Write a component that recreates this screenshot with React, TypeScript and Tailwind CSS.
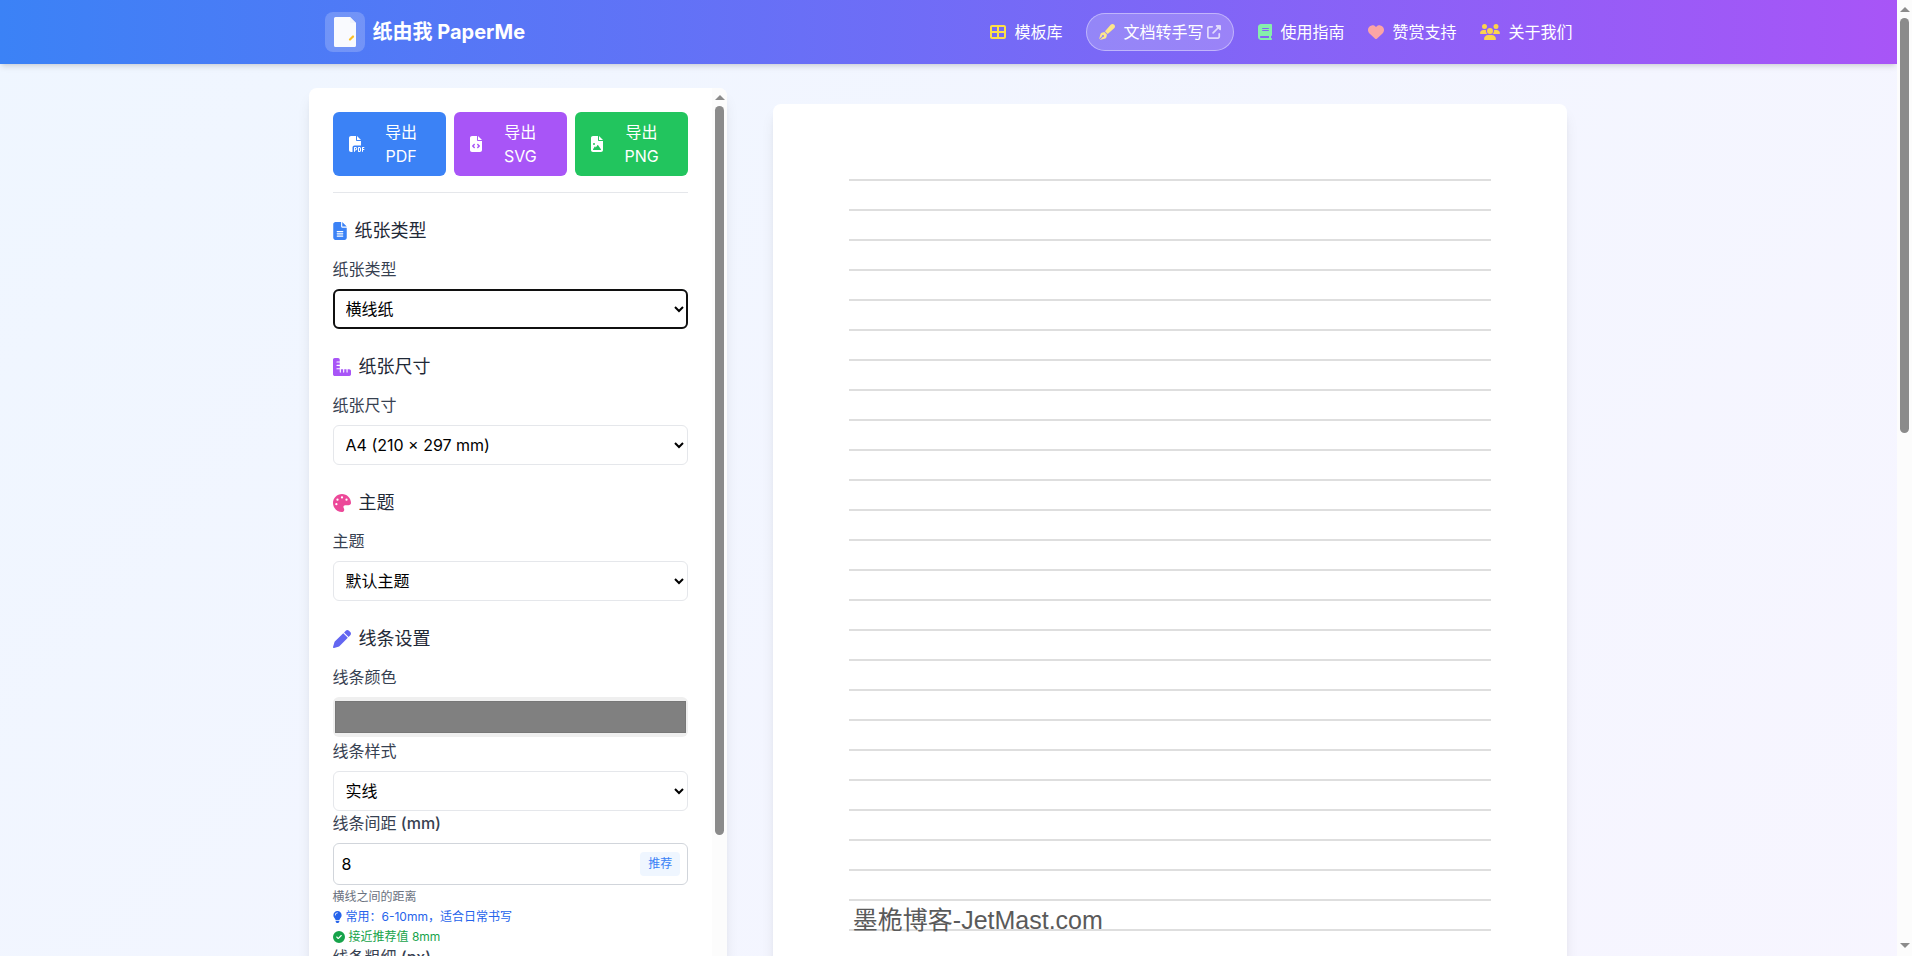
import type { ReactNode } from 'react';
import {
  FaBook,
  FaCircleCheck,
  FaFileCode,
  FaFileImage,
  FaFileLines,
  FaFilePdf,
  FaHeart,
  FaLightbulb,
  FaPalette,
  FaPen,
  FaPenFancy,
  FaRulerCombined,
  FaTableCellsLarge,
  FaUpRightFromSquare,
  FaUsers,
} from 'react-icons/fa6';

const LINE_COUNT = 33;

function Logo() {
  return (
    <div className="flex h-10 w-10 items-center justify-center rounded-lg bg-white/20">
      <svg viewBox="0 0 22 30" className="h-[30px] w-[22px]" aria-hidden="true">
        <path d="M1.5 0H16l6 6v22.5a1.5 1.5 0 0 1-1.5 1.5h-19A1.5 1.5 0 0 1 0 28.5v-27A1.5 1.5 0 0 1 1.5 0Z" fill="#f9fafe" />
        <path d="M16 0v5a1 1 0 0 0 1 1h5Z" fill="#f1f4fc" />
        <path d="M16 22.500l3-3" stroke="#fbbf24" strokeWidth="2.200" strokeLinecap="round" />
      </svg>
    </div>
  );
}

function Header() {
  return (
    <header className="relative bg-linear-to-r/srgb from-[#3b82f6] to-[#a855f7] text-white shadow-md">
      <div className="mx-auto flex h-16 max-w-7xl items-center justify-between px-4">
        <a href="#" className="flex items-center gap-2">
          <Logo />
          <span className="text-xl font-bold">纸由我 PaperMe</span>
        </a>
        <nav className="flex items-center gap-6">
          <a href="#templates" className="flex items-center gap-2">
            <FaTableCellsLarge className="h-4 w-4 text-[#fde047]" />
            模板库
          </a>
          <a
            href="#handwriting"
            className="flex items-center rounded-full border border-white/40 bg-white/20 px-3 py-1.5"
          >
            <FaPenFancy className="mr-2 h-4 w-4 text-[#fde68a]" />
            文档转手写
            <FaUpRightFromSquare className="ml-1 h-3.5 w-3.5 opacity-70" />
          </a>
          <a href="#guide" className="flex items-center gap-2">
            <FaBook className="h-4 w-3.5 text-[#86efac]" />
            使用指南
          </a>
          <a href="#support" className="flex items-center gap-2">
            <FaHeart className="h-4 w-4 text-[#fca5a5]" />
            赞赏支持
          </a>
          <a href="#about" className="flex items-center gap-2">
            <FaUsers className="h-4 w-5 text-[#fcd34d]" />
            关于我们
          </a>
        </nav>
      </div>
    </header>
  );
}

function ExportButton({ icon, label, className }: { icon: ReactNode; label: string; className: string }) {
  return (
    <button type="button" className={`flex flex-1 items-center gap-2 rounded-md px-4 py-2 text-white ${className}`}>
      {icon}
      <span className="flex-1">导出 {label}</span>
    </button>
  );
}

function Section({ icon, title, children }: { icon: ReactNode; title: string; children: ReactNode }) {
  return (
    <section>
      <h2 className="mb-3 flex items-center gap-2 text-lg leading-7 text-[#1f2937]">
        {icon}
        {title}
      </h2>
      {children}
    </section>
  );
}

function Label({ htmlFor, text, unit }: { htmlFor: string; text: string; unit?: string }) {
  return (
    <label htmlFor={htmlFor} className="mb-2 block text-[#374151]">
      {text}
      {unit && <span className="font-medium"> ({unit})</span>}
    </label>
  );
}

function Select({ id, value, active }: { id: string; value: string; active?: boolean }) {
  return (
    <select
      id={id}
      defaultValue={value}
      className={`block h-10 w-full rounded-md border border-[#e5e7eb] bg-white p-2 text-black ${
        active ? 'outline-2 -outline-offset-2 outline-[#101010]' : ''
      }`}
    >
      <option>{value}</option>
    </select>
  );
}

function Scrollbar({ thumb }: { thumb: string }) {
  return (
    <div aria-hidden="true" className="flex w-[15px] shrink-0 flex-col items-center bg-[#fcfcfc]">
      <svg viewBox="0 0 10 5" className="mt-[7px] mb-1.5 h-[5px] w-2.5 shrink-0">
        <path d="M5 0l5 5H0Z" fill="#8b8b8b" />
      </svg>
      <div className={`w-[9px] shrink-0 rounded-full bg-[#8b8b8b] ${thumb}`} />
      <svg viewBox="0 0 10 5" className="mt-auto mb-2 h-[5px] w-2.5 shrink-0">
        <path d="M5 5l5-5H0Z" fill="#8b8b8b" />
      </svg>
    </div>
  );
}

function Sidebar() {
  return (
    <aside className="flex h-screen overflow-hidden rounded-lg bg-white shadow-lg">
      <div className="flex-1 space-y-6 overflow-hidden p-6">
        <div className="flex gap-2 border-b border-[#e5e7eb] pb-4">
          <ExportButton icon={<FaFilePdf className="h-4 w-4 shrink-0" />} label="PDF" className="bg-[#3b82f6]" />
          <ExportButton icon={<FaFileCode className="h-4 w-3 shrink-0" />} label="SVG" className="bg-[#a855f7]" />
          <ExportButton icon={<FaFileImage className="h-4 w-3 shrink-0" />} label="PNG" className="bg-[#22c55e]" />
        </div>

        <Section icon={<FaFileLines className="h-[18px] w-3.5 text-[#3b82f6]" />} title="纸张类型">
          <Label htmlFor="paper-type" text="纸张类型" />
          <Select id="paper-type" value="横线纸" active />
        </Section>

        <Section icon={<FaRulerCombined className="h-[18px] w-[18px] text-[#a855f7]" />} title="纸张尺寸">
          <Label htmlFor="paper-size" text="纸张尺寸" />
          <Select id="paper-size" value="A4 (210 × 297 mm)" />
        </Section>

        <Section icon={<FaPalette className="h-[18px] w-[18px] text-[#ec4899]" />} title="主题">
          <Label htmlFor="theme" text="主题" />
          <Select id="theme" value="默认主题" />
        </Section>

        <Section icon={<FaPen className="h-[18px] w-[18px] text-[#6366f1]" />} title="线条设置">
          <Label htmlFor="line-color" text="线条颜色" />
          <input
            id="line-color"
            type="color"
            defaultValue="#808080"
            className="mb-0.5 block h-10 w-full rounded-md bg-[#efefef]"
          />
          <Label htmlFor="line-style" text="线条样式" />
          <Select id="line-style" value="实线" />
          <Label htmlFor="line-gap" text="线条间距" unit="mm" />
          <div className="relative">
            <input
              id="line-gap"
              type="number"
              defaultValue={8}
              className="block w-full rounded-md border border-[#d1d5db] bg-white p-2 text-black"
            />
            <button
              type="button"
              className="absolute top-1/2 right-2 -translate-y-1/2 rounded-sm bg-[#eff6ff] px-2 py-1 text-xs text-[#3b82f6]"
            >
              推荐
            </button>
          </div>
          <p className="mt-1 text-xs text-[#6b7280]">横线之间的距离</p>
          <p className="mt-1 flex items-center gap-1 text-xs text-[#2563eb]">
            <FaLightbulb className="h-3 w-[9px]" />
            常用：6-10mm，适合日常书写
          </p>
          <p className="mt-1 flex items-center gap-1 text-xs text-[#16a34a]">
            <FaCircleCheck className="h-3 w-3" />
            接近推荐值 8mm
          </p>
          <Label htmlFor="line-width" text="线条粗细" unit="px" />
          <input
            id="line-width"
            type="number"
            defaultValue={1}
            className="block w-full rounded-md border border-[#d1d5db] bg-white p-2 text-black"
          />
        </Section>
      </div>
      <Scrollbar thumb="h-[calc(76%+2px)]" />
    </aside>
  );
}

function Paper() {
  return (
    <div className="relative w-full max-w-[794px] rounded-lg bg-white px-[76px] py-[75px] shadow-lg">
      <div className="space-y-7">
        {Array.from({ length: LINE_COUNT }, (_, i) => (
          <div key={i} className="h-0.5 bg-[#dedede]" />
        ))}
      </div>
      <span className="absolute top-[798px] left-20 font-['Liberation_Sans','Noto_Sans_CJK_SC',sans-serif] text-[25px] text-[#5a5a5a]">
        墨桅博客-JetMast.com
      </span>
    </div>
  );
}

export default function App() {
  return (
    <div className="flex h-screen overflow-hidden font-['Inter','Noto_Sans_CJK_SC',sans-serif] text-base">
      <div className="min-w-0 flex-1 overflow-hidden">
        <div className="min-h-[222vh] bg-linear-to-br/srgb from-[#eff6ff] to-[#faf5ff]">
          <Header />
          <main className="mx-auto grid max-w-7xl grid-cols-[1fr_2fr] items-start gap-6 py-6">
            <Sidebar />
            <div className="flex justify-center pt-4">
              <Paper />
            </div>
          </main>
        </div>
      </div>
      <Scrollbar thumb="h-[calc(45%-15px)]" />
    </div>
  );
}
